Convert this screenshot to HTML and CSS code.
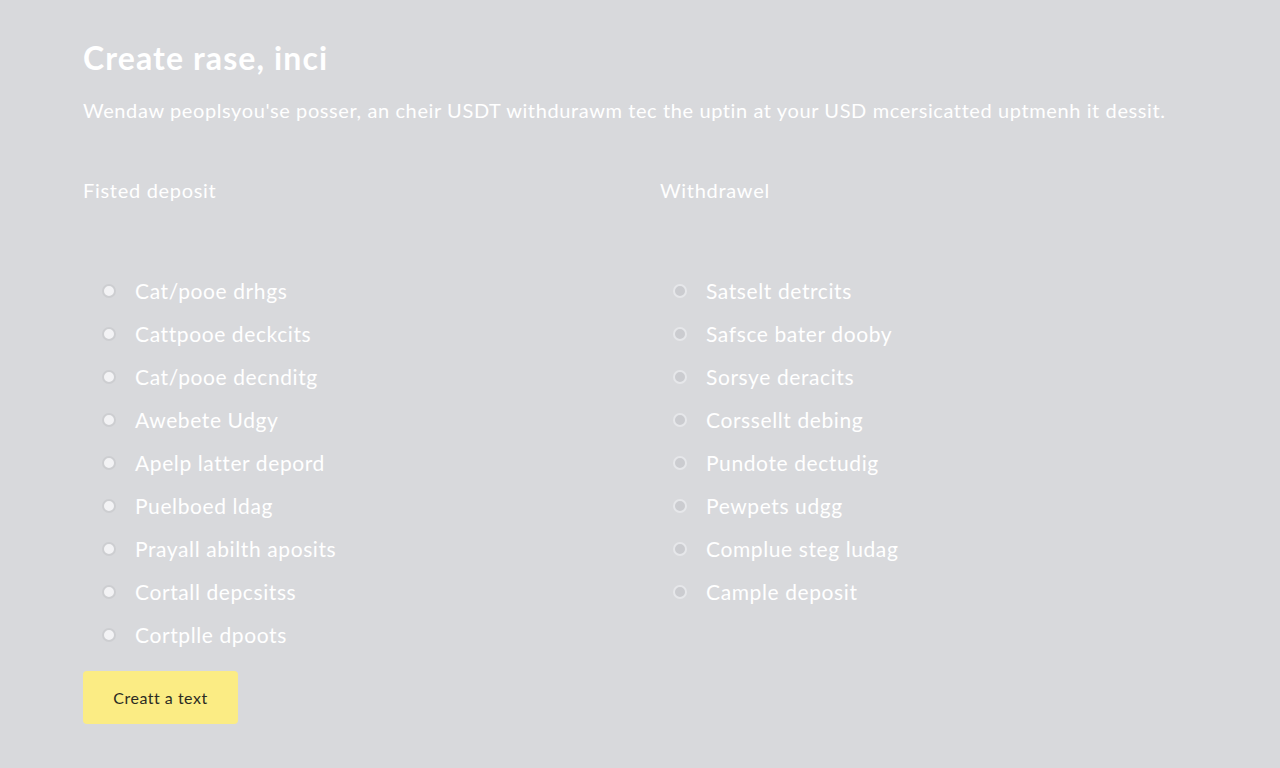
FILE: index.html
```html
<!DOCTYPE html>
<html lang="en">
<head>
  <meta charset="UTF-8" />
  <meta name="viewport" content="width=device-width, initial-scale=1.0"/>
  <title>Create rase, inci</title>
  <link rel="stylesheet" href="styles.css">
</head>
<body>

  <div class="page">
    <h1>Create rase, inci</h1>
    <p class="intro">Wendaw peoplsyou'se posser, an cheir USDT withdurawm tec the uptin at your USD mcersicatted uptmenh it dessit.</p>

    <div class="columns">
      <!-- deposit column -->
      <div class="col">
        <h2>Fisted deposit</h2>
        <ul class="opts">
          <li><span class="dot"></span>Cat/pooe drhgs</li>
          <li><span class="dot"></span>Cattpooe deckcits</li>
          <li><span class="dot"></span>Cat/pooe decnditg</li>
          <li><span class="dot"></span>Awebete Udgy</li>
          <li><span class="dot"></span>Apelp latter depord</li>
          <li><span class="dot"></span>Puelboed ldag</li>
          <li><span class="dot"></span>Prayall abilth aposits</li>
          <li><span class="dot"></span>Cortall depcsitss</li>
          <li><span class="dot"></span>Cortplle dpoots</li>
        </ul>
      </div>

      <!-- withdrawal column -->
      <div class="col">
        <h2>Withdrawel</h2>
        <ul class="opts alt">
          <li><span class="dot"></span>Satselt detrcits</li>
          <li><span class="dot"></span>Safsce bater dooby</li>
          <li><span class="dot"></span>Sorsye deracits</li>
          <li><span class="dot"></span>Corssellt debing</li>
          <li><span class="dot"></span>Pundote dectudig</li>
          <li><span class="dot"></span>Pewpets udgg</li>
          <li><span class="dot"></span>Complue steg ludag</li>
          <li><span class="dot"></span>Cample deposit</li>
        </ul>
      </div>
    </div>

    <button class="btn">Creatt a text</button>
  </div>

</body>
</html>
```

FILE: styles.css
```css
* { box-sizing: border-box; margin:0; padding:0; }
body, html {
  height: 100%;
  font-family: Lato, 'Open Sans', sans-serif;
  background: #d8d9dc;
  color: #fff;
}

.page {
  padding: 38px 0 0 83px;
}

h1 {
  font-size: 32px;
  font-weight: 700;
  line-height: 40px;
  letter-spacing: 1.1px;
}

.intro {
  margin-top: 20px;
  font-size: 20px;
  line-height: 24px;
  font-weight: 400;
  letter-spacing: 0.6px;
}

/* two lists side by side */
.columns {
  display: grid;
  grid-template-columns: 577px 1fr;
  margin-top: 56px;
}

h2 {
  font-size: 20px;
  font-weight: 400;
  line-height: 24px;
  letter-spacing: 0.7px;
}

.opts {
  list-style: none;
  margin-top: 67px;
}

.opts li {
  display: flex;
  align-items: center;
  height: 43px;
  font-size: 21px;
  letter-spacing: 0.6px;
  padding-left: 19px;
}

.dot {
  width: 14px;
  height: 14px;
  border-radius: 50%;
  background: #f3f3f5;
  border: 2px solid #cdced1;
  margin-right: 19px;
}

.alt li {
  padding-left: 13px;
}

.alt .dot {
  background: #cbccd0;
  border-color: #e6e7ea;
}

.btn {
  margin-top: 15px;
  width: 155px;
  height: 53px;
  background: #fbec84;
  border: none;
  border-radius: 4px;
  font-family: Lato, sans-serif;
  font-size: 16px;
  letter-spacing: 0.5px;
  color: #2b2b23;
}
```
